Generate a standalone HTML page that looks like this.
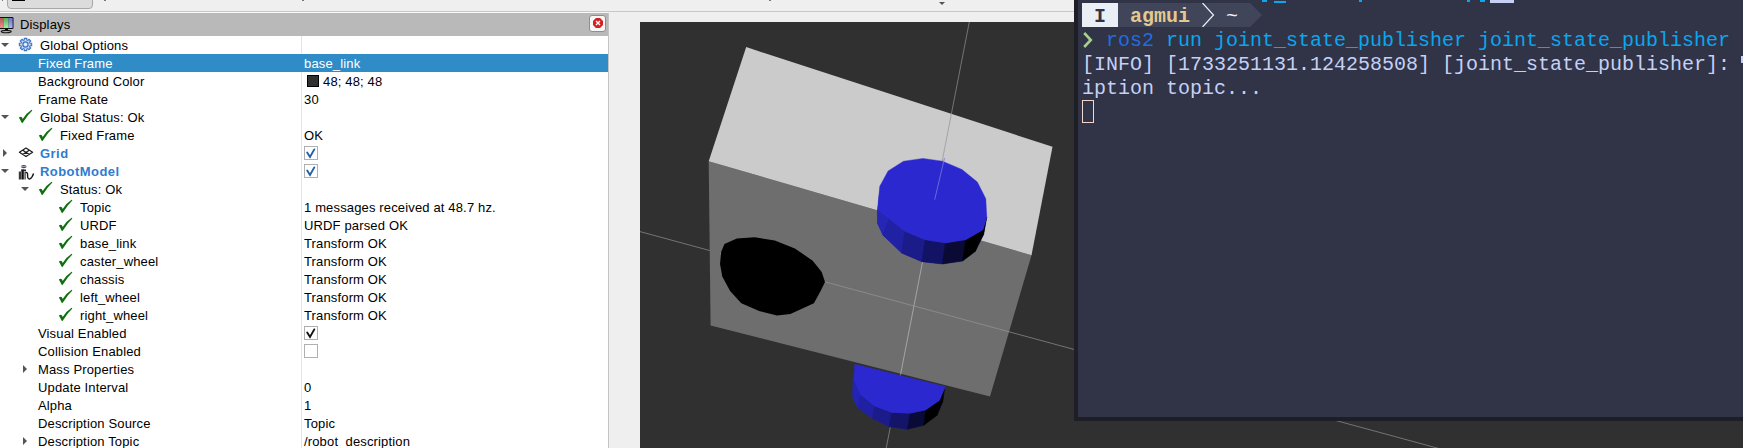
<!DOCTYPE html>
<html><head><meta charset="utf-8">
<style>
html,body{margin:0;padding:0}
body{width:1743px;height:448px;overflow:hidden;position:relative;background:#efefef;font-family:"Liberation Sans",sans-serif;font-size:13px}
.t{position:absolute;height:18px;line-height:20px;white-space:nowrap;letter-spacing:0.15px}
.ad{position:absolute;width:0;height:0;border-left:4px solid transparent;border-right:4px solid transparent;border-top:4px solid #555}
.ar{position:absolute;width:0;height:0;border-top:4px solid transparent;border-bottom:4px solid transparent;border-left:4px solid #555}
.m{position:absolute;font-family:"Liberation Mono",monospace;font-size:20px;line-height:28px;height:24px;white-space:pre}
</style></head><body>
<!-- toolbar -->
<div style="position:absolute;left:7px;top:-12px;width:84px;height:19px;background:#dcdcdc;border:1px solid #a8a8a8;border-radius:4px"></div>
<div style="position:absolute;left:12px;top:0;width:13px;height:1px;background:#000"></div>
<div style="position:absolute;left:0;top:11px;width:1074px;height:1px;background:#c8c8c8"></div>
<div style="position:absolute;left:0;top:12px;width:609px;height:1px;background:#f8f8f8"></div>
<div style="position:absolute;left:2px;top:0;width:1px;height:1px;background:#777"></div>
<div style="position:absolute;left:104px;top:0;width:2px;height:1px;background:#777"></div>
<div style="position:absolute;left:302px;top:0;width:2px;height:1px;background:#777"></div>
<div style="position:absolute;left:769px;top:0;width:2px;height:1px;background:#777"></div>
<div style="position:absolute;left:939px;top:2px;width:0;height:0;border-left:3.5px solid transparent;border-right:3.5px solid transparent;border-top:3.5px solid #555"></div>
<!-- Displays panel -->
<div style="position:absolute;left:0;top:13px;width:609px;height:23px;background:#b9b9b9"></div>
<svg style="position:absolute;left:0;top:16px" width="15" height="18" viewBox="0 0 15 18">
<defs><linearGradient id="gr" x1="0" y1="0" x2="0" y2="1"><stop offset="0" stop-color="#b05858"/><stop offset="1" stop-color="#f09090"/></linearGradient>
<linearGradient id="gg" x1="0" y1="0" x2="0" y2="1"><stop offset="0" stop-color="#58b058"/><stop offset="1" stop-color="#a0f0a0"/></linearGradient>
<linearGradient id="gb" x1="0" y1="0" x2="0" y2="1"><stop offset="0" stop-color="#7070d0"/><stop offset="1" stop-color="#b0b0ff"/></linearGradient></defs>
<rect x="-1" y="1" width="14.5" height="12" fill="#111" rx="1.2"/>
<rect x="0" y="2" width="3.3" height="10" fill="url(#gr)"/>
<rect x="3.3" y="2" width="5.4" height="10" fill="url(#gg)"/>
<rect x="8.7" y="2" width="3.9" height="10" fill="url(#gb)"/>
<rect x="5" y="13" width="3" height="1.5" fill="#111"/>
<ellipse cx="6.2" cy="15.6" rx="5" ry="1.2" fill="none" stroke="#111" stroke-width="1.1"/>
</svg>
<div class="t" style="left:20px;top:15px;color:#000">Displays</div>
<div style="position:absolute;left:589px;top:15px;width:15px;height:15px;background:#f6f6f6;border:1px solid #8e8e8e;border-radius:3px"></div>
<svg style="position:absolute;left:593px;top:18px" width="10" height="10" viewBox="0 0 11 11">
<polygon points="3.2,0 7.8,0 11,3.2 11,7.8 7.8,11 3.2,11 0,7.8 0,3.2" fill="#d42020"/>
<path d="M3.3 3.3 L7.7 7.7 M7.7 3.3 L3.3 7.7" stroke="#fff" stroke-width="1.5"/>
</svg>
<div style="position:absolute;left:0;top:36px;width:608px;height:412px;background:#fff"></div>
<div style="position:absolute;left:608px;top:13px;width:1px;height:435px;background:#c4c4c4"></div>
<div style="position:absolute;left:301px;top:36px;width:1px;height:412px;background:#e4e4e4"></div>
<div class="t" style="left:40px;top:36px;color:#000;font-weight:normal;">Global Options</div>
<div class="ad" style="left:1px;top:43px"></div>
<svg style="position:absolute;left:18px;top:37px" width="15" height="15" viewBox="0 0 15 15"><path d="M12.04 6.29 L13.67 6.25 L13.67 8.75 L12.04 8.71 L11.57 9.86 L12.75 10.98 L10.98 12.75 L9.86 11.57 L8.71 12.04 L8.75 13.67 L6.25 13.67 L6.29 12.04 L5.14 11.57 L4.02 12.75 L2.25 10.98 L3.43 9.86 L2.96 8.71 L1.33 8.75 L1.33 6.25 L2.96 6.29 L3.43 5.14 L2.25 4.02 L4.02 2.25 L5.14 3.43 L6.29 2.96 L6.25 1.33 L8.75 1.33 L8.71 2.96 L9.86 3.43 L10.98 2.25 L12.75 4.02 L11.57 5.14 Z" fill="#c8d6f0" stroke="#3b73c6" stroke-width="1.1" stroke-linejoin="miter"/><circle cx="7.5" cy="7.5" r="2.6" fill="none" stroke="#3b73c6" stroke-width="1.2"/><circle cx="7.5" cy="7.5" r="1.1" fill="#fff"/></svg>
<div style="position:absolute;left:0;top:54px;width:608px;height:18px;background:#308cc6"></div>
<div class="t" style="left:38px;top:54px;color:#fff;font-weight:normal;">Fixed Frame</div>
<div class="t" style="left:304px;top:54px;color:#fff">base_link</div>
<div class="t" style="left:38px;top:72px;color:#000;font-weight:normal;">Background Color</div>
<div style="position:absolute;left:307px;top:75px;width:10px;height:10px;background:#303030;border:1px solid #000"></div>
<div class="t" style="left:323px;top:72px;color:#000">48; 48; 48</div>
<div class="t" style="left:38px;top:90px;color:#000;font-weight:normal;">Frame Rate</div>
<div class="t" style="left:304px;top:90px;color:#000">30</div>
<div class="t" style="left:40px;top:108px;color:#000;font-weight:normal;">Global Status: Ok</div>
<div class="ad" style="left:1px;top:115px"></div>
<svg style="position:absolute;left:14px;top:108px" width="20" height="18" viewBox="0 0 20 18"><path d="M4.8 9.6 L6.6 8.8 L7.9 9.3 L8.7 11.0 L12.4 5.9 L17.6 1.8 L18.4 2.4 L14.2 6.9 L10.3 12.5 L8.5 14.9 L7.6 14.7 L6.3 11.9 Z" fill="#0f6f0f"/></svg>
<div class="t" style="left:60px;top:126px;color:#000;font-weight:normal;">Fixed Frame</div>
<svg style="position:absolute;left:34px;top:126px" width="20" height="18" viewBox="0 0 20 18"><path d="M4.8 9.6 L6.6 8.8 L7.9 9.3 L8.7 11.0 L12.4 5.9 L17.6 1.8 L18.4 2.4 L14.2 6.9 L10.3 12.5 L8.5 14.9 L7.6 14.7 L6.3 11.9 Z" fill="#0f6f0f"/></svg>
<div class="t" style="left:304px;top:126px;color:#000">OK</div>
<div class="t" style="left:40px;top:144px;color:#2f7bd0;font-weight:bold;letter-spacing:0.45px;">Grid</div>
<div class="ar" style="left:3px;top:149px"></div>
<svg style="position:absolute;left:18px;top:147px" width="16" height="11" viewBox="0 0 16 11"><g fill="none" stroke="#1a1a1a" stroke-width="1.2" stroke-linejoin="round"><path d="M8 1 L14.6 5.3 L8 9.6 L1.4 5.3 Z M4.7 3.15 L11.3 7.45 M11.3 3.15 L4.7 7.45"/></g></svg>
<svg style="position:absolute;left:304px;top:146px" width="14" height="14" viewBox="0 0 14 14"><rect x="0.5" y="0.5" width="13" height="13" fill="#fff" stroke="#b0b0b0"/><path d="M3.2 6.6 L6 11 L10.3 3.4" fill="none" stroke="#1f5fae" stroke-width="1.9" stroke-linecap="round"/></svg>
<div class="t" style="left:40px;top:162px;color:#2f7bd0;font-weight:bold;letter-spacing:0.45px;">RobotModel</div>
<div class="ad" style="left:1px;top:169px"></div>
<svg style="position:absolute;left:18px;top:163px" width="17" height="17" viewBox="0 0 17 17"><ellipse cx="5.8" cy="3.6" rx="2.8" ry="1.7" fill="#2a3c8c"/><rect x="3.2" y="3.3" width="5.2" height="0.8" fill="#c8c8c8"/><rect x="0.8" y="8.5" width="2.2" height="8" fill="#3a3a3a"/><rect x="3.4" y="6.5" width="2.4" height="10" fill="#111"/><rect x="3.4" y="6.5" width="4.6" height="1.8" fill="#222"/><rect x="6.2" y="9" width="1.8" height="7.5" fill="#777"/><path d="M7.5 9.5 Q9.8 9 9.6 12 Q9.4 16.6 12 15.8 Q14 15 15.6 10.5" fill="none" stroke="#151515" stroke-width="1.4"/></svg>
<svg style="position:absolute;left:304px;top:164px" width="14" height="14" viewBox="0 0 14 14"><rect x="0.5" y="0.5" width="13" height="13" fill="#fff" stroke="#b0b0b0"/><path d="M3.2 6.6 L6 11 L10.3 3.4" fill="none" stroke="#1f5fae" stroke-width="1.9" stroke-linecap="round"/></svg>
<div class="t" style="left:60px;top:180px;color:#000;font-weight:normal;">Status: Ok</div>
<div class="ad" style="left:21px;top:187px"></div>
<svg style="position:absolute;left:34px;top:180px" width="20" height="18" viewBox="0 0 20 18"><path d="M4.8 9.6 L6.6 8.8 L7.9 9.3 L8.7 11.0 L12.4 5.9 L17.6 1.8 L18.4 2.4 L14.2 6.9 L10.3 12.5 L8.5 14.9 L7.6 14.7 L6.3 11.9 Z" fill="#0f6f0f"/></svg>
<div class="t" style="left:80px;top:198px;color:#000;font-weight:normal;">Topic</div>
<svg style="position:absolute;left:54px;top:198px" width="20" height="18" viewBox="0 0 20 18"><path d="M4.8 9.6 L6.6 8.8 L7.9 9.3 L8.7 11.0 L12.4 5.9 L17.6 1.8 L18.4 2.4 L14.2 6.9 L10.3 12.5 L8.5 14.9 L7.6 14.7 L6.3 11.9 Z" fill="#0f6f0f"/></svg>
<div class="t" style="left:304px;top:198px;color:#000">1 messages received at 48.7 hz.</div>
<div class="t" style="left:80px;top:216px;color:#000;font-weight:normal;">URDF</div>
<svg style="position:absolute;left:54px;top:216px" width="20" height="18" viewBox="0 0 20 18"><path d="M4.8 9.6 L6.6 8.8 L7.9 9.3 L8.7 11.0 L12.4 5.9 L17.6 1.8 L18.4 2.4 L14.2 6.9 L10.3 12.5 L8.5 14.9 L7.6 14.7 L6.3 11.9 Z" fill="#0f6f0f"/></svg>
<div class="t" style="left:304px;top:216px;color:#000">URDF parsed OK</div>
<div class="t" style="left:80px;top:234px;color:#000;font-weight:normal;">base_link</div>
<svg style="position:absolute;left:54px;top:234px" width="20" height="18" viewBox="0 0 20 18"><path d="M4.8 9.6 L6.6 8.8 L7.9 9.3 L8.7 11.0 L12.4 5.9 L17.6 1.8 L18.4 2.4 L14.2 6.9 L10.3 12.5 L8.5 14.9 L7.6 14.7 L6.3 11.9 Z" fill="#0f6f0f"/></svg>
<div class="t" style="left:304px;top:234px;color:#000">Transform OK</div>
<div class="t" style="left:80px;top:252px;color:#000;font-weight:normal;">caster_wheel</div>
<svg style="position:absolute;left:54px;top:252px" width="20" height="18" viewBox="0 0 20 18"><path d="M4.8 9.6 L6.6 8.8 L7.9 9.3 L8.7 11.0 L12.4 5.9 L17.6 1.8 L18.4 2.4 L14.2 6.9 L10.3 12.5 L8.5 14.9 L7.6 14.7 L6.3 11.9 Z" fill="#0f6f0f"/></svg>
<div class="t" style="left:304px;top:252px;color:#000">Transform OK</div>
<div class="t" style="left:80px;top:270px;color:#000;font-weight:normal;">chassis</div>
<svg style="position:absolute;left:54px;top:270px" width="20" height="18" viewBox="0 0 20 18"><path d="M4.8 9.6 L6.6 8.8 L7.9 9.3 L8.7 11.0 L12.4 5.9 L17.6 1.8 L18.4 2.4 L14.2 6.9 L10.3 12.5 L8.5 14.9 L7.6 14.7 L6.3 11.9 Z" fill="#0f6f0f"/></svg>
<div class="t" style="left:304px;top:270px;color:#000">Transform OK</div>
<div class="t" style="left:80px;top:288px;color:#000;font-weight:normal;">left_wheel</div>
<svg style="position:absolute;left:54px;top:288px" width="20" height="18" viewBox="0 0 20 18"><path d="M4.8 9.6 L6.6 8.8 L7.9 9.3 L8.7 11.0 L12.4 5.9 L17.6 1.8 L18.4 2.4 L14.2 6.9 L10.3 12.5 L8.5 14.9 L7.6 14.7 L6.3 11.9 Z" fill="#0f6f0f"/></svg>
<div class="t" style="left:304px;top:288px;color:#000">Transform OK</div>
<div class="t" style="left:80px;top:306px;color:#000;font-weight:normal;">right_wheel</div>
<svg style="position:absolute;left:54px;top:306px" width="20" height="18" viewBox="0 0 20 18"><path d="M4.8 9.6 L6.6 8.8 L7.9 9.3 L8.7 11.0 L12.4 5.9 L17.6 1.8 L18.4 2.4 L14.2 6.9 L10.3 12.5 L8.5 14.9 L7.6 14.7 L6.3 11.9 Z" fill="#0f6f0f"/></svg>
<div class="t" style="left:304px;top:306px;color:#000">Transform OK</div>
<div class="t" style="left:38px;top:324px;color:#000;font-weight:normal;">Visual Enabled</div>
<svg style="position:absolute;left:304px;top:326px" width="14" height="14" viewBox="0 0 14 14"><rect x="0.5" y="0.5" width="13" height="13" fill="#fff" stroke="#b0b0b0"/><path d="M3.2 6.6 L6 11 L10.3 3.4" fill="none" stroke="#111" stroke-width="1.9" stroke-linecap="round"/></svg>
<div class="t" style="left:38px;top:342px;color:#000;font-weight:normal;">Collision Enabled</div>
<svg style="position:absolute;left:304px;top:344px" width="14" height="14" viewBox="0 0 14 14"><rect x="0.5" y="0.5" width="13" height="13" fill="#fff" stroke="#b0b0b0"/></svg>
<div class="t" style="left:38px;top:360px;color:#000;font-weight:normal;">Mass Properties</div>
<div class="ar" style="left:23px;top:365px"></div>
<div class="t" style="left:38px;top:378px;color:#000;font-weight:normal;">Update Interval</div>
<div class="t" style="left:304px;top:378px;color:#000">0</div>
<div class="t" style="left:38px;top:396px;color:#000;font-weight:normal;">Alpha</div>
<div class="t" style="left:304px;top:396px;color:#000">1</div>
<div class="t" style="left:38px;top:414px;color:#000;font-weight:normal;">Description Source</div>
<div class="t" style="left:304px;top:414px;color:#000">Topic</div>
<div class="t" style="left:38px;top:432px;color:#000;font-weight:normal;">Description Topic</div>
<div class="ar" style="left:23px;top:437px"></div>
<div class="t" style="left:304px;top:432px;color:#000">/robot_description</div>
<!-- viewport -->
<div style="position:absolute;left:640px;top:22px;width:1103px;height:426px;background:#303030;overflow:hidden">
<svg width="1103" height="426" viewBox="0 0 1103 426" style="position:absolute;left:0;top:0">
<line x1="0" y1="209.6" x2="1103" y2="509.06450000000007" stroke="#747474" stroke-width="1"/>
<line x1="329.29999999999995" y1="0" x2="246.2299999999999" y2="426" stroke="#747474" stroke-width="1"/>
<polygon points="68.7,139.2 391.5,233.3 350.0,374.4 70.6,303.5" fill="#6e6e6e"/>
<polygon points="106.2,25.1 412.5,124.8 391.5,233.3 68.7,139.2" fill="#cbcbcb"/>
<line x1="0" y1="209.6" x2="1103" y2="509.06450000000007" stroke="#8a8a8a" stroke-width="1" clip-path="url(#cf)"/>
<line x1="329.29999999999995" y1="0" x2="246.2299999999999" y2="426" stroke="#a4a4a4" stroke-width="1" clip-path="url(#cf)"/>
<clipPath id="cf"><polygon points="68.7,139.2 391.5,233.3 350.0,374.4 70.6,303.5 106.2,25.1 412.5,124.8 391.5,233.3 68.7,139.2"/></clipPath>
<polygon points="84.5,222.0 96.8,216.4 114.7,215.3 134.8,218.6 154.9,226.5 172.7,238.7 181.7,249.9 185.0,260.0 180.6,268.9 173.9,281.2 150.4,291.9 137.0,293.5 119.1,289.0 101.3,281.2 90.1,268.9 82.3,254.4 80.0,242.0 81.2,229.8" fill="#000"/>
<polygon points="239.8,164.3 237.5,187.4 237.5,201.4" fill="#2525b6"/>
<polygon points="237.5,187.4 249.2,196.8 264.8,209.2 285.1,217.8 305.4,221.0 325.8,217.8 343.0,207.7 346.8,195.2 343.7,212.4 335.1,229.6 322.6,239.0 302.3,242.0 282.0,239.7 261.7,231.1 243.0,213.2 237.5,201.4" fill="#2525b6"/>
<polygon points="237.5,187.4 249.2,196.8 243.0,213.2 237.5,201.4" fill="#2525b6" stroke="#2525b6" stroke-width="0.5"/>
<polygon points="249.2,196.8 264.8,209.2 261.7,231.1 243.0,213.2" fill="#2121a4" stroke="#2121a4" stroke-width="0.5"/>
<polygon points="264.8,209.2 285.1,217.8 282.0,239.7 261.7,231.1" fill="#1b1b8a" stroke="#1b1b8a" stroke-width="0.5"/>
<polygon points="285.1,217.8 305.4,221.0 302.3,242.0 282.0,239.7" fill="#131366" stroke="#131366" stroke-width="0.5"/>
<polygon points="305.4,221.0 325.8,217.8 322.6,239.0 302.3,242.0" fill="#0a0a34" stroke="#0a0a34" stroke-width="0.5"/>
<polygon points="325.8,217.8 343.0,207.7 335.1,229.6 322.6,239.0" fill="#000000" stroke="#000000" stroke-width="0.5"/>
<polygon points="343.0,207.7 346.8,195.2 343.7,212.4 335.1,229.6" fill="#000000" stroke="#000000" stroke-width="0.5"/>
<polygon points="248.1,148.9 263.5,139.2 283.0,136.4 302.5,139.2 322.0,147.5 337.4,160.1 345.8,176.8 346.8,195.2 343.0,207.7 325.8,217.8 305.4,221.0 285.1,217.8 264.8,209.2 249.2,196.8 237.5,187.4 239.8,164.3" fill="#2b28d0" stroke="#2b28d0" stroke-width="0.4"/>
<line x1="304.5" y1="136" x2="294.70000000000005" y2="177.6" stroke="#7a78d8" stroke-width="0.8"/>
<polygon points="214.6,342.1 213.8,357.8 212.6,375.1 212.6,358.0" fill="#2424b4"/>
<polygon points="213.8,357.8 220.4,372.7 234.4,384.2 251.7,390.8 269.9,391.6 285.6,388.3 299.6,378.4 304.5,366.9 302.9,379.3 297.1,393.3 283.9,403.2 267.4,407.3 249.3,404.8 232.8,396.6 217.9,385.9 212.6,375.1" fill="#2424b4"/>
<polygon points="213.8,357.8 220.4,372.7 217.9,385.9 212.6,375.1" fill="#2424b4" stroke="#2424b4" stroke-width="0.5"/>
<polygon points="220.4,372.7 234.4,384.2 232.8,396.6 217.9,385.9" fill="#2020a2" stroke="#2020a2" stroke-width="0.5"/>
<polygon points="234.4,384.2 251.7,390.8 249.3,404.8 232.8,396.6" fill="#1b1b8a" stroke="#1b1b8a" stroke-width="0.5"/>
<polygon points="251.7,390.8 269.9,391.6 267.4,407.3 249.3,404.8" fill="#141468" stroke="#141468" stroke-width="0.5"/>
<polygon points="269.9,391.6 285.6,388.3 283.9,403.2 267.4,407.3" fill="#0a0a38" stroke="#0a0a38" stroke-width="0.5"/>
<polygon points="285.6,388.3 299.6,378.4 297.1,393.3 283.9,403.2" fill="#000000" stroke="#000000" stroke-width="0.5"/>
<polygon points="299.6,378.4 304.5,366.9 302.9,379.3 297.1,393.3" fill="#000000" stroke="#000000" stroke-width="0.5"/>
<polygon points="214.6,342.1 305.4,364.4 304.5,366.9 299.6,378.4 285.6,388.3 269.9,391.6 251.7,390.8 234.4,384.2 220.4,372.7 213.8,357.8" fill="#2b28d0"/>
</svg>
</div>
<!-- terminal -->
<div style="position:absolute;left:1074px;top:-4px;width:669px;height:425px;background:#1e1f26"></div>
<div style="position:absolute;left:1078px;top:-4px;width:665px;height:421px;background:#303446"></div>
<div style="position:absolute;left:1082px;top:3px;width:36px;height:24px;background:#eaeef5"></div>
<svg style="position:absolute;left:1118px;top:3px" width="144" height="24" viewBox="0 0 144 24"><polygon points="0,0 132,0 144,12 132,24 0,24" fill="#414559"/>
<path d="M84.5 0 L95.5 12 L84.5 24" fill="none" stroke="#eef0f8" stroke-width="1.2"/></svg>
<div class="m" style="left:1082px;top:3px;color:#303446;font-weight:bold">&nbsp;I</div>
<div class="m" style="left:1130px;top:3px;color:#e5c890;font-weight:bold">agmui</div>
<div class="m" style="left:1226px;top:3px;color:#eef0f8">~</div>
<svg style="position:absolute;left:1083px;top:32px" width="10" height="16" viewBox="0 0 10 16"><path d="M1.2 1 L7.8 8 L1.2 15" fill="none" stroke="#a6d189" stroke-width="2.6" stroke-linejoin="miter"/></svg>
<div class="m" style="left:1106px;top:27px;color:#1e6ee0">ros2</div>
<div class="m" style="left:1166px;top:27px;color:#0aa6ee">run joint_state_publisher joint_state_publisher</div>
<div class="m" style="left:1082px;top:51px;color:#c6d0f5">[INFO] [1733251131.124258508] [joint_state_publisher]: </div>
<div style="position:absolute;left:1741px;top:56px;width:2px;height:7px;background:#c6d0f5"></div>
<div class="m" style="left:1082px;top:75px;color:#c6d0f5">iption topic...</div>
<div style="position:absolute;left:1082px;top:100px;width:10px;height:21px;border:1px solid #f2d5cf"></div>
<!-- residual descenders top -->
<div style="position:absolute;left:1262px;top:0;width:5px;height:2px;background:#0aa6ee"></div>
<div style="position:absolute;left:1274px;top:1px;width:12px;height:1.5px;background:#0aa6ee"></div>
<div style="position:absolute;left:1359px;top:0;width:3px;height:2px;background:#0aa6ee"></div>
<div style="position:absolute;left:1467px;top:0;width:3px;height:2px;background:#0aa6ee"></div>
<div style="position:absolute;left:1480px;top:0;width:5px;height:2px;background:#0aa6ee"></div>
<div style="position:absolute;left:1490px;top:0;width:24px;height:3px;background:#c6d0f5"></div>
</body></html>
